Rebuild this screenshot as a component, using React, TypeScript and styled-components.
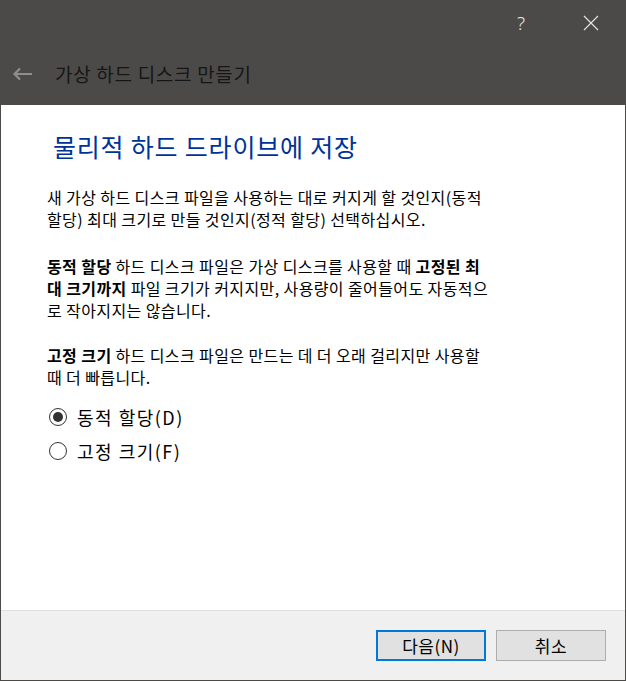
import React, { useState } from "react";
import styled, { createGlobalStyle } from "styled-components";

const GlobalStyle = createGlobalStyle`
  html, body {
    margin: 0;
    padding: 0;
    background: #ffffff;
  }
  body {
    font-family: "Noto Sans CJK KR", "Malgun Gothic", sans-serif;
  }
  * { box-sizing: border-box; }
`;

const Window = styled.div`
  width: 626px;
  height: 681px;
  display: flex;
  flex-direction: column;
  border-left: 1px solid #4b4a48;
  border-right: 1px solid #4b4a48;
  border-bottom: 1px solid #4b4a48;
  background: #ffffff;
  font-family: "Noto Sans CJK KR", "Malgun Gothic", sans-serif;
  color: #000;
`;

const Header = styled.header`
  height: 105px;
  flex: none;
  display: flex;
  flex-direction: column;
  background: #4b4a48;
`;

const TitleBar = styled.div`
  height: 45px;
  display: flex;
  justify-content: flex-end;
  align-items: center;
  gap: 24px;
  padding-right: 11px;
`;

const CaptionButton = styled.button`
  width: 46px;
  height: 45px;
  display: flex;
  align-items: center;
  justify-content: center;
  padding: 0;
  border: none;
  background: transparent;
  color: #e6e6e6;
  font-family: "Noto Sans", "DejaVu Sans", sans-serif;
  font-size: 19px;
  font-weight: 300;
  cursor: default;
`;

const NavRow = styled.div`
  flex: 1;
  display: flex;
  align-items: center;
  padding-left: 11px;
  padding-bottom: 2px;
`;

const BackButton = styled.button`
  width: 21px;
  height: 14px;
  display: flex;
  align-items: center;
  justify-content: center;
  padding: 0;
  border: none;
  background: transparent;
`;

const WizardTitle = styled.h1`
  margin: 0 0 0 22px;
  font-size: 19px;
  font-weight: 400;
  letter-spacing: 0.7px;
  line-height: 26px;
  color: #161616;
`;

const Content = styled.main`
  flex: 1;
  padding: 27px 0 0 46px;
`;

const Heading = styled.h2`
  margin: 0 0 0 6px;
  font-size: 25px;
  font-weight: 400;
  letter-spacing: 0.8px;
  line-height: 28px;
  color: #003399;
`;

const Paragraph = styled.p<{ $top: number }>`
  margin: ${(p) => p.$top}px 0 0;
  width: 560px;
  font-size: 16px;
  letter-spacing: 0.4px;
  line-height: 22px;
`;

const Strong = styled.b`
  font-weight: 700;
`;

const RadioGroup = styled.div`
  margin-top: 12px;
  display: flex;
  flex-direction: column;
`;

const RadioRow = styled.label`
  height: 34px;
  display: flex;
  align-items: center;
  gap: 10px;
  padding-left: 2px;
  font-size: 18px;
  letter-spacing: 1.5px;
  cursor: default;
`;

const HiddenInput = styled.input`
  position: absolute;
  opacity: 0;
  width: 0;
  height: 0;
  margin: 0;
`;

const RadioCircle = styled.span<{ $checked: boolean }>`
  width: 18px;
  height: 18px;
  border-radius: 50%;
  border: 1px solid #333333;
  background: #ffffff;
  display: flex;
  align-items: center;
  justify-content: center;
  flex: none;

  &::after {
    content: "";
    width: 10px;
    height: 10px;
    border-radius: 50%;
    background: #333333;
    display: ${(p) => (p.$checked ? "block" : "none")};
  }
`;

const Footer = styled.footer`
  height: 70px;
  flex: none;
  display: flex;
  justify-content: flex-end;
  align-items: flex-start;
  gap: 10px;
  padding: 19px 19px 0 0;
  background: #f0f0f0;
  border-top: 1px solid #dfdfdf;
`;

const DialogButton = styled.button<{ $default?: boolean }>`
  width: 110px;
  height: 31px;
  padding: 0;
  background: #e1e1e1;
  border: ${(p) => (p.$default ? "2px solid #0078d7" : "1px solid #adadad")};
  font-family: "Noto Sans CJK KR", "Malgun Gothic", sans-serif;
  font-size: 17px;
  letter-spacing: 0.5px;
  color: #000;
  cursor: default;
`;

const BackArrow = () => (
  <svg width="21" height="14" viewBox="0 0 21 14" fill="none">
    <path d="M20 7H2.5M8 1.5L2.5 7L8 12.5" stroke="#8e8e8e" strokeWidth="2.2" />
  </svg>
);

const CloseIcon = () => (
  <svg width="16" height="16" viewBox="0 0 16 16" fill="none">
    <path d="M1 1L15 15M15 1L1 15" stroke="#e6e6e6" strokeWidth="1.1" />
  </svg>
);

export default function App() {
  const [mode, setMode] = useState<"dynamic" | "fixed">("dynamic");

  return (
    <>
      <GlobalStyle />
      <Window>
        <Header>
          <TitleBar>
            <CaptionButton aria-label="도움말">?</CaptionButton>
            <CaptionButton aria-label="닫기">
              <CloseIcon />
            </CaptionButton>
          </TitleBar>
          <NavRow>
            <BackButton aria-label="뒤로">
              <BackArrow />
            </BackButton>
            <WizardTitle>가상 하드 디스크 만들기</WizardTitle>
          </NavRow>
        </Header>
        <Content>
          <Heading>물리적 하드 드라이브에 저장</Heading>
          <Paragraph $top={26}>
            새 가상 하드 디스크 파일을 사용하는 대로 커지게 할 것인지(동적
            <br />
            할당) 최대 크기로 만들 것인지(정적 할당) 선택하십시오.
          </Paragraph>
          <Paragraph $top={25}>
            <Strong>동적 할당</Strong> 하드 디스크 파일은 가상 디스크를 사용할 때{" "}
            <Strong>
              고정된 최<br />대 크기까지
            </Strong>{" "}
            파일 크기가 커지지만, 사용량이 줄어들어도 자동적으
            <br />로 작아지지는 않습니다.
          </Paragraph>
          <Paragraph $top={23}>
            <Strong>고정 크기</Strong> 하드 디스크 파일은 만드는 데 더 오래 걸리지만 사용할
            <br />때 더 빠릅니다.
          </Paragraph>
          <RadioGroup role="radiogroup">
            <RadioRow>
              <HiddenInput
                type="radio"
                name="alloc"
                checked={mode === "dynamic"}
                onChange={() => setMode("dynamic")}
              />
              <RadioCircle $checked={mode === "dynamic"} />
              동적 할당(D)
            </RadioRow>
            <RadioRow>
              <HiddenInput
                type="radio"
                name="alloc"
                checked={mode === "fixed"}
                onChange={() => setMode("fixed")}
              />
              <RadioCircle $checked={mode === "fixed"} />
              고정 크기(F)
            </RadioRow>
          </RadioGroup>
        </Content>
        <Footer>
          <DialogButton $default>다음(N)</DialogButton>
          <DialogButton>취소</DialogButton>
        </Footer>
      </Window>
    </>
  );
}
